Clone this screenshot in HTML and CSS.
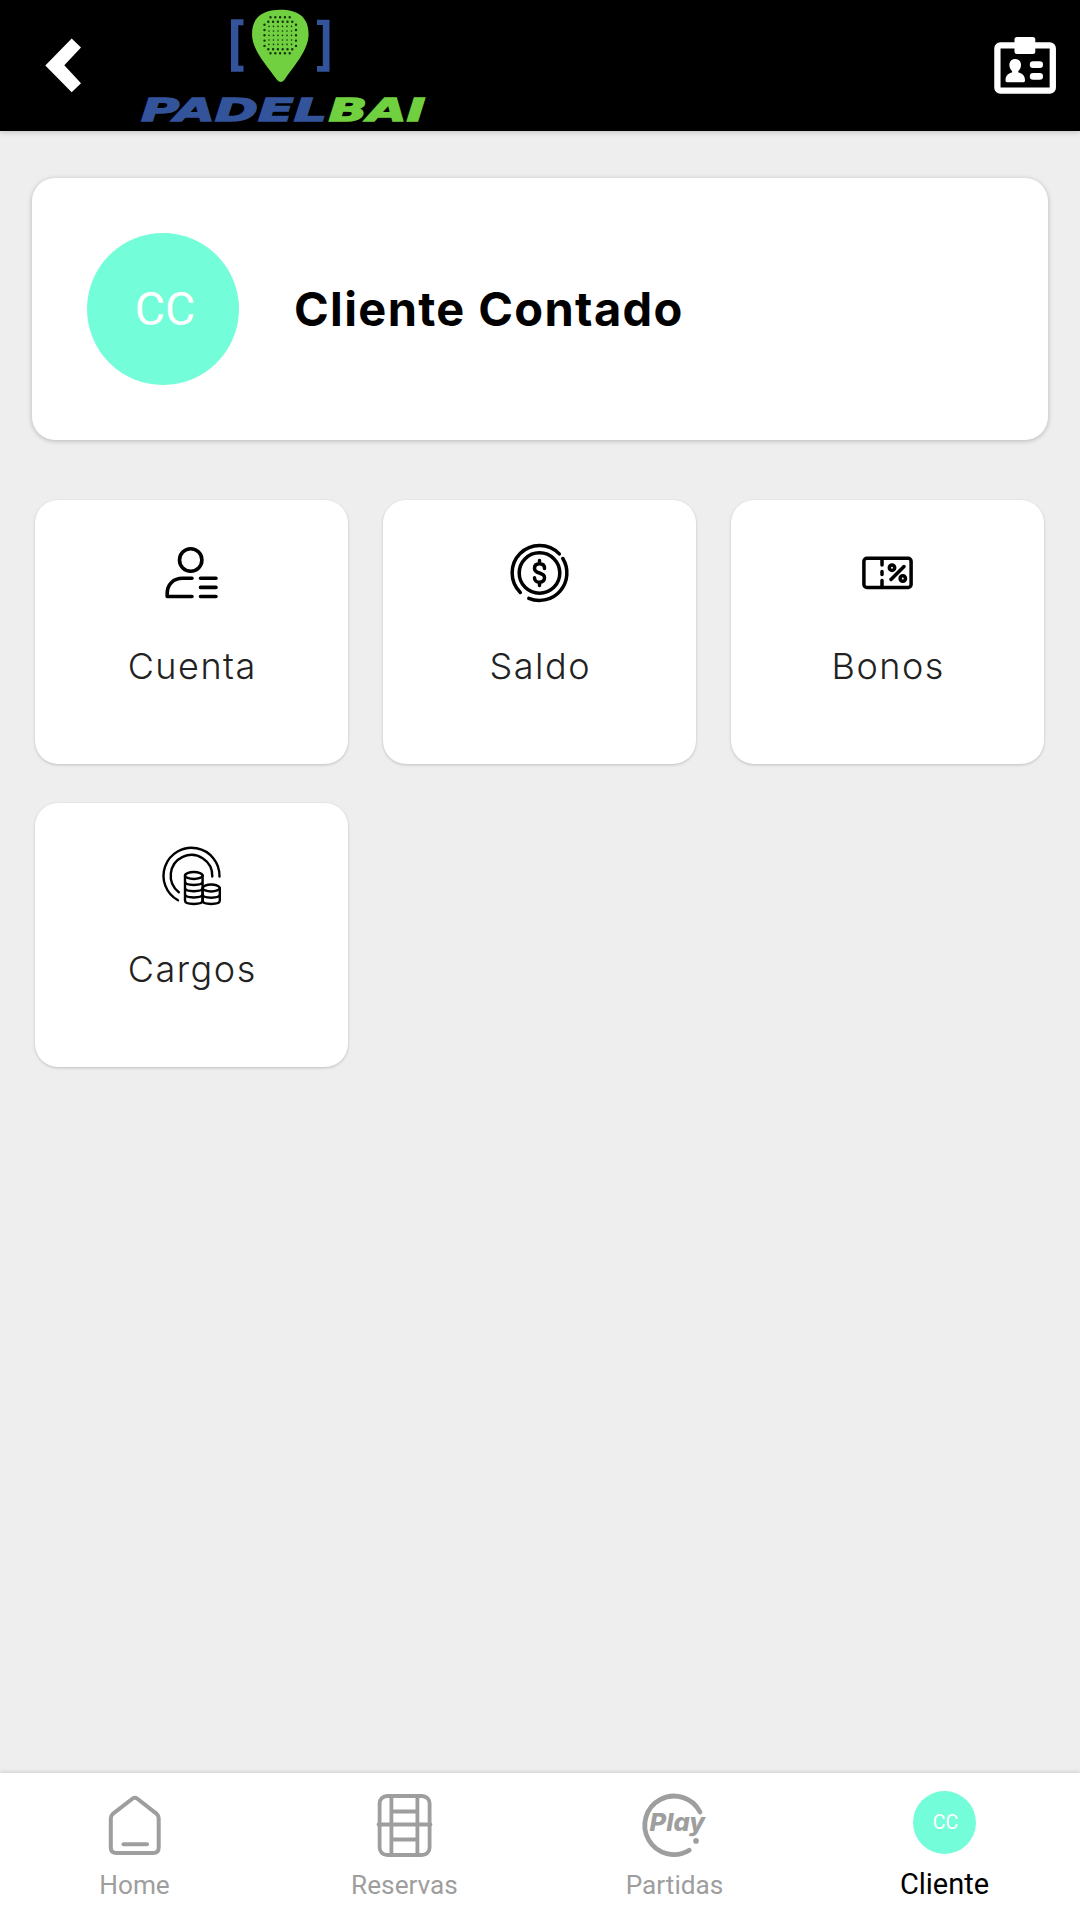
FILE: index.html
```html
<!DOCTYPE html>
<html lang="es">
<head>
<meta charset="utf-8">
<title>Padelbai – Cliente</title>
<link rel="stylesheet" href="styles.css">
</head>
<body>
<div class="app">
  <header class="topbar">
    <svg class="back" viewBox="44 37 38 57" aria-label="Volver"><path d="M71.7 38.5 81 47.5 64.3 65.2 81 83.3 71.7 92.3 45.3 65.4z"/></svg>
    <svg class="logo" viewBox="138 6 292 124">
      <path class="blue" d="M231 19.3h12.5v6H238.300v40.400h5.200v6H231zM329.500 19.800H317v5.300h5.800v41H317v5.600h12.500z"/>
      <path class="green" d="M280.500 9.700C298 9.700 308.600 17 308.600 34c0 16-14 31-24.300 46q-3.600 4-7.200 0C266.500 65 252 50 252 34c0-17 11-24.300 28.500-24.300z"/>
      <g class="dots">
        <path d="M270.500 17.300h19.500M270.500 53.300h19.500"/>
        <path d="M268.300 21.700h24.500M268.300 49.200h24.500"/>
        <path class="fine" d="M269 26.400h23M269 31h23M269 35.400h23M269 40h23M269 44.400h23"/>
        <path class="side" d="M264.500 24.700v22M296 24.700v22"/>
      </g>
      <text class="word blue" x="141" y="120.700" textLength="186" lengthAdjust="spacingAndGlyphs">PADEL</text>
      <text class="word green" x="328.500" y="120.700" textLength="97" lengthAdjust="spacingAndGlyphs">BAI</text>
    </svg>
    <svg class="card-id" viewBox="994 36 63 59" aria-label="Carnet">
      <rect x="997.400" y="45.400" width="55.400" height="45.300" rx="3" fill="none" stroke="#fff" stroke-width="6.300"/>
      <rect x="1014.500" y="37" width="20.800" height="17" rx="2.500"/>
      <path d="M1015.200 59c4 0 6 3 5.800 6.500-.2 2.500-1.300 4.200-2.700 5.500v1.500c4 .8 6.700 3 6.700 8 0 1-.6 1.700-1.500 1.700h-16.500c-.9 0-1.500-.7-1.500-1.700 0-5 2.700-7.200 6.600-8V71c-1.400-1.300-2.500-3-2.700-5.500-.2-3.500 1.800-6.500 5.800-6.500z"/>
      <rect x="1029.800" y="61.300" width="13.200" height="6.700" rx="3.300"/>
      <rect x="1029.800" y="73" width="13.200" height="6.700" rx="3.300"/>
    </svg>
  </header>

  <main class="content">
    <section class="profile">
      <div class="avatar">CC</div>
      <h1 class="name">Cliente Contado</h1>
    </section>

    <section class="tiles">
      <a class="tile">
        <svg class="tile-icon" viewBox="159.500 541 64 64" stroke-width="3.600">
          <circle cx="190.200" cy="560" r="11.200"/>
          <path d="M191.500 578.300H182c-9 0-15.300 6-15.300 15v3.200h24.800M200 578.300h15.500M200 587.400h15.500M200 596.500h15.500"/>
        </svg>
        <span class="tile-label">Cuenta</span>
      </a>
      <a class="tile">
        <svg class="tile-icon" viewBox="507.500 541 64 64" stroke-width="3.500">
          <circle cx="539" cy="573" r="20.300"/>
          <path d="M558.800 553.900A27.500 27.500 0 0 0 519.600 553.600A27.500 27.500 0 0 0 519.800 592.500M528.300 598.300A27.500 27.500 0 0 0 562.300 558.500"/>
          <path d="M544 568.500c0-3-2-4.700-5-4.700s-5 1.700-5 4.600c0 6 10 3.200 10 9.200 0 3-2 4.700-5 4.700s-5-1.800-5-4.600M539 560.500v3M539 582.500v3"/>
        </svg>
        <span class="tile-label">Saldo</span>
      </a>
      <a class="tile">
        <svg class="tile-icon" viewBox="855.500 541 64 64" stroke-width="3.500">
          <rect x="863.400" y="558.300" width="47.200" height="29.200" rx="3"/>
          <path d="M881.500 559v6M881.500 571.500v3M881.500 580.500v6"/>
          <path d="M903.500 566.500l-13 13"/>
          <circle cx="891.500" cy="567.700" r="2.700"/>
          <circle cx="902.300" cy="578.500" r="2.700"/>
        </svg>
        <span class="tile-label">Bonos</span>
      </a>
      <a class="tile">
        <svg class="tile-icon" viewBox="159.500 844 64 64" stroke-width="2.400">
          <path d="M219 876.500A28 28 0 1 0 177.500 900.300M211.800 876.500A20.800 20.800 0 1 0 178.300 892.200"/>
          <ellipse cx="193.300" cy="875.500" rx="8.800" ry="3.500"/>
          <path d="M184.500 875.500v25c0 4.600 17.600 4.600 17.600 0v-25M184.500 881.500c0 4.600 17.600 4.600 17.600 0M184.500 887.800c0 4.600 17.600 4.600 17.600 0M184.500 894.100c0 4.600 17.600 4.600 17.600 0"/>
          <ellipse cx="210.700" cy="888" rx="8.500" ry="3.500"/>
          <path d="M202.100 888v12.500c0 4.600 17.200 4.600 17.200 0V888M202.100 894.300c0 4.600 17.200 4.600 17.200 0"/>
        </svg>
        <span class="tile-label">Cargos</span>
      </a>
    </section>
  </main>

  <nav class="tabs">
    <a class="tab">
      <svg class="tab-icon" viewBox="102.500 1793 64 64" stroke-width="4">
        <path d="M132.200 1798.500q2.200-1.600 4.400 0l19.600 15.400q2 1.800 2 4.400v29.200q0 5.500-5.500 5.500h-36.900q-5.500 0-5.500-5.500v-29.200q0-2.600 2-4.400z"/>
        <path d="M123 1844.300h23.500"/>
      </svg>
      <span class="tab-label">Home</span>
    </a>
    <a class="tab">
      <svg class="tab-icon" viewBox="373 1793 64 64" stroke-width="3.800">
        <rect x="379.600" y="1796" width="50" height="59" rx="7.500"/>
        <path d="M391.400 1797v57M417.400 1797v57M378.500 1824.500h52M392 1811.500h25M392 1839.500h25"/>
      </svg>
      <span class="tab-label">Reservas</span>
    </a>
    <a class="tab">
      <svg class="tab-icon" viewBox="643 1793 64 64" stroke-width="4.800">
        <path d="M700 1812A29.200 29.200 0 1 0 689.200 1850.200"/>
        <text class="play" x="649.500" y="1831.300" textLength="55.500" lengthAdjust="spacingAndGlyphs">Play</text>
        <circle class="dot" cx="696" cy="1840.900" r="2.800"/>
      </svg>
      <span class="tab-label">Partidas</span>
    </a>
    <a class="tab active">
      <span class="mini-avatar">CC</span>
      <span class="tab-label">Cliente</span>
    </a>
  </nav>
</div>
</body>
</html>
```
FILE: styles.css
```css
* { box-sizing: border-box; }

body {
  margin: 0;
  background: #eee;
  font-family: Inter, "Liberation Sans", sans-serif;
}

.app {
  width: 1080px;
  height: 1920px;
  display: flex;
  flex-direction: column;
}

/* Top bar */
.topbar {
  height: 131px;
  flex: none;
  display: flex;
  align-items: flex-start;
  padding-left: 44px;
  background: #000;
  box-shadow: 0 1px 6px rgba(0, 0, 0, .2);
}
.back { width: 38px; height: 57px; margin-top: 37px; fill: #fff; }
.logo { width: 292px; height: 124px; margin: 6px 0 0 56px; overflow: visible; }
.card-id { width: 63px; height: 59px; margin: 36px 23px 0 auto; fill: #fff; }

.blue { fill: #33539b; }
.green { fill: #70d03f; }
.word { font: italic bold 32.6px "DejaVu Sans", sans-serif; stroke-width: 1.4; }
.word.blue { stroke: #33539b; }
.word.green { stroke: #70d03f; }
.dots { fill: none; stroke: #14300a; stroke-linecap: round; stroke-width: 2.4; stroke-dasharray: 0 4.8; }
.dots .fine { stroke-width: 1.6; stroke-dasharray: 0 4.5; }
.dots .side { stroke-dasharray: 0 5.3; }

/* Profile */
.content { flex: 1; padding: 47px 32px 0; }
.profile {
  height: 262px;
  padding: 0 55px;
  display: flex;
  align-items: center;
  gap: 55px;
  background: #fff;
  border-radius: 23px;
  box-shadow: 0 1px 5px rgba(0, 0, 0, .24);
}
.avatar, .mini-avatar {
  display: flex;
  align-items: center;
  justify-content: center;
  border-radius: 50%;
  background: #73fdd8;
  color: #fff;
  font-family: Roboto, sans-serif;
}
.avatar { width: 152px; height: 152px; padding-left: 4px; font-size: 46.5px; font-weight: 400; }
.name {
  margin: 0;
  font-size: 47px;
  line-height: 56px;
  font-weight: 700;
  letter-spacing: 1.35px;
  color: #000;
}

/* Option tiles */
.tiles {
  margin: 60px 3px 0;
  display: grid;
  grid-template-columns: repeat(3, 313px);
  gap: 39px 35px;
}
.tile {
  height: 264px;
  padding-top: 41px;
  display: flex;
  flex-direction: column;
  align-items: center;
  gap: 41px;
  background: #fff;
  border-radius: 23px;
  box-shadow: 0 1px 3px rgba(0, 0, 0, .2);
}
.tile-icon { width: 64px; height: 64px; fill: none; stroke: #000; stroke-linecap: round; stroke-linejoin: round; }
.tile-label { font-size: 36px; line-height: 40px; font-weight: 350; letter-spacing: 1.5px; margin-right: -1.5px; color: #222; }

/* Bottom tabs */
.tabs {
  height: 147px;
  flex: none;
  display: grid;
  grid-template-columns: repeat(4, 1fr);
  background: #fff;
  box-shadow: 0 -1px 4px rgba(0, 0, 0, .14);
}
.tab {
  padding: 20px 1px 0 0;
  display: flex;
  flex-direction: column;
  align-items: center;
  gap: 12px;
  color: #9e9e9e;
  font-family: Roboto, sans-serif;
}
.tab-icon { width: 64px; height: 64px; fill: none; stroke: #9e9e9e; stroke-linecap: round; stroke-linejoin: round; overflow: visible; }
.play { font: italic 800 25px Inter, sans-serif; fill: #9e9e9e; stroke: none; }
.dot { fill: #9e9e9e; stroke: none; }
.tab-label { font-size: 26.2px; line-height: 32px; }
.tab.active { padding-top: 18px; gap: 14px; color: #000; }
.active .tab-label { font-size: 29px; }
.mini-avatar { width: 63px; height: 63px; padding-left: 2px; font-size: 19.5px; font-weight: 400; }
```
